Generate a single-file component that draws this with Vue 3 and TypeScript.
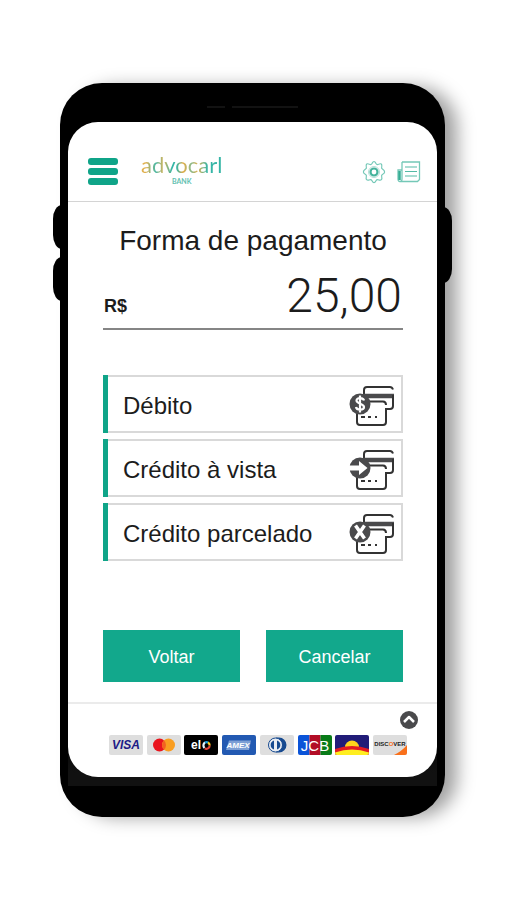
<script setup lang="ts">
type Badge = 'dollar' | 'arrow' | 'cross'

interface PaymentOption {
  label: string
  badge: Badge
}

const amount = '25,00'

const options: PaymentOption[] = [
  { label: 'Débito', badge: 'dollar' },
  { label: 'Crédito à vista', badge: 'arrow' },
  { label: 'Crédito parcelado', badge: 'cross' },
]
</script>

<template>
  <div class="page">
    <div class="phone">
      <span class="side-key volume-up"></span>
      <span class="side-key volume-down"></span>
      <span class="side-key power"></span>
      <div class="speaker"><i class="slot short"></i><i class="slot"></i></div>
      <div class="bezel">
        <div class="screen">
          <header class="topbar">
            <button class="icon-button menu" type="button" aria-label="Menu">
              <span></span><span></span><span></span>
            </button>
            <a class="logo" href="#">
              <span class="logo-name">advocarl</span>
              <span class="logo-sub">BANK</span>
            </a>
            <button class="icon-button" type="button" aria-label="Configurações">
              <svg width="24" height="24" viewBox="0 0 24 24" fill="none" stroke="#74c8b7">
                <path
                  d="M10 3.500Q12-.5 14 3.500q.8 1.500 2.500.8 4-1.800 3.200 2.400-.6 1.800 1 2.600Q24.500 12 20.700 14.300q-1.600.8-1 2.600 1 4-3.200 2.900-1.700-.6-2.500.9-2 3.800-4 0-.8-1.500-2.500-.9-4.200 1.100-3.200-2.900.6-1.800-1-2.600Q-.5 12 3.300 9.300q1.600-.8 1-2.600Q3.500 2.500 7.500 4.300q1.700.7 2.500-.8z"
                  stroke-width="1.200"
                  stroke-linejoin="round"
                />
                <circle cx="12" cy="12" r="5.500" stroke="#b5e0d7" />
                <circle cx="12" cy="12" r="3.500" stroke="#45b39c" stroke-width="2.200" />
              </svg>
            </button>
            <button class="icon-button" type="button" aria-label="Extrato">
              <svg width="24" height="22" viewBox="0 0 24 22" fill="none" stroke="#74c8b7">
                <path d="M5 1h17.500v17.500l-2 2H3.500" stroke-width="1.300" />
                <path d="M5 1v17q0 2.500-2 2.500T1 18V9h4" stroke-width="1.300" />
                <path d="M2.500 10v9" stroke="#35ad94" stroke-width="2.500" />
                <path d="M8 6h12M8 10.500h12M8 15h12" stroke="#55baa5" stroke-width="1.200" />
              </svg>
            </button>
          </header>

          <main class="content">
            <h1>Forma de pagamento</h1>
            <div class="amount">
              <span class="currency">R$</span>
              <span class="value">{{ amount }}</span>
            </div>

            <div class="options">
              <button v-for="option in options" :key="option.badge" class="option" type="button">
                <span>{{ option.label }}</span>
                <svg width="46" height="42" viewBox="0 0 46 42" fill="none" stroke="#333" aria-hidden="true">
                  <path d="M15 9V5q0-3 3-3h23q2 0 3 2.500" stroke-width="2" />
                  <path d="M14 11h31" stroke="#4a4a4c" stroke-width="4.500" />
                  <path d="M44 10v11q0 3-3 3h-4" stroke-width="2" />
                  <path d="M20 16.500h14q3 0 3 3.500" stroke-width="2" />
                  <path d="M37 23v14q0 3-3 3H11q-3 0-3-3v-9" stroke-width="2" />
                  <path d="M12 32h4M19 32h3M26 32h2" stroke-width="2" />
                  <circle cx="11" cy="19" r="10.500" fill="#4a4a4c" stroke="none" />
                  <path
                    v-if="option.badge === 'dollar'"
                    d="M15 15.500c-.5-3-7.500-3.500-7.500 0s7.500 3 7.500 6.500-7.500 3.500-8 0M11 10.500v17"
                    stroke="#fff"
                    stroke-width="2.200"
                  />
                  <path
                    v-else-if="option.badge === 'arrow'"
                    d="M0 16.500h10V12l8.500 7-8.500 7v-4.500H0z"
                    fill="#fff"
                    stroke="none"
                  />
                  <path v-else d="M6.500 12.500l9 13M15.500 12.500l-9 13" stroke="#fff" stroke-width="3.500" />
                </svg>
              </button>
            </div>

            <div class="actions">
              <button type="button">Voltar</button>
              <button type="button">Cancelar</button>
            </div>
          </main>

          <footer class="footer">
            <button class="icon-button expand" type="button" aria-label="Expandir">
              <svg width="18" height="18" viewBox="0 0 18 18" fill="none">
                <circle cx="9" cy="9" r="9" fill="#4a4a4c" />
                <path d="M4 11l5-5 5 5" stroke="#fff" stroke-width="2.500" stroke-linejoin="round" />
              </svg>
            </button>
            <div class="brands">
              <svg viewBox="0 0 34 20" role="img" aria-label="Visa">
                <rect width="34" height="20" rx="2" fill="#dedede" />
                <text x="17" y="14" class="mark visa">VISA</text>
              </svg>
              <svg viewBox="0 0 34 20" role="img" aria-label="Mastercard">
                <rect width="34" height="20" rx="2" fill="#dedede" />
                <circle cx="12.500" cy="10" r="6.500" fill="#e9141d" />
                <circle cx="21.500" cy="10" r="6.500" fill="#f99d20" />
                <path d="M17 5.300a6.500 6.500 0 0 1 0 9.400 6.500 6.500 0 0 1 0-9.400" fill="#f26122" />
              </svg>
              <svg viewBox="0 0 34 20" role="img" aria-label="Elo">
                <rect width="34" height="20" rx="2" />
                <text x="12" y="14" class="mark elo">el</text>
                <g fill="none" stroke-width="2.200">
                  <path d="M20.500 13a3.500 3.500 0 0 1 .5-5.500" stroke="#e8f4fa" />
                  <path d="M21 7.500a3.500 3.500 0 0 1 3 0" stroke="#19a5e0" />
                  <path d="M24 7.500a3.500 3.500 0 0 1 1.700 3" stroke="#ffd21f" />
                  <path d="M25.700 10.500a3.500 3.500 0 0 1-5 3" stroke="#e94435" />
                </g>
              </svg>
              <svg viewBox="0 0 34 20" role="img" aria-label="Amex">
                <rect width="34" height="20" rx="2" fill="#2259b2" />
                <path d="M7 5.500h22l-2 9.500H4z" fill="#7c9fd5" />
                <text x="16" y="13" class="mark amex">AMEX</text>
              </svg>
              <svg viewBox="0 0 34 20" role="img" aria-label="Diners Club">
                <rect width="34" height="20" rx="2" fill="#dedede" />
                <path d="M16 2.500h3a7.500 7.500 0 0 1 0 15h-3z" fill="#174a90" />
                <circle cx="15.500" cy="10" r="7" fill="#e9edf3" stroke="#174a90" />
                <path d="M14 5.500a4.700 4.700 0 0 0 0 9zM17 5.500a4.700 4.700 0 0 1 0 9z" fill="#174a90" />
              </svg>
              <svg viewBox="0 0 34 20" role="img" aria-label="JCB">
                <path d="M2 0h9.500v20H2q-2 0-2-2V2q0-2 2-2" fill="#0b54d8" />
                <path d="M11.500 0h11v20h-11z" fill="#b20d26" />
                <path d="M22.500 0H32q2 0 2 2v16q0 2-2 2h-9.500z" fill="#087b18" />
                <text x="17" y="16" class="mark jcb">JCB</text>
              </svg>
              <svg viewBox="0 0 34 20" role="img" aria-label="Sorocred">
                <rect width="34" height="20" rx="2" fill="#211c78" />
                <path d="M10 12a7 6.500 0 0 1 14 0z" fill="#ffd51c" />
                <path d="M0 14q17-6 34 0v4q0 2-2 2H2q-2 0-2-2z" fill="#e31b23" />
                <path d="M0 17.500q17-6 34 0v.5q0 2-2 2H2q-2 0-2-2z" fill="#ffee20" />
              </svg>
              <svg viewBox="0 0 34 20" role="img" aria-label="Discover">
                <rect width="34" height="20" rx="2" fill="#dedede" />
                <path d="M34 10v8q0 2-2 2H21q8-4 13-10" fill="#f9701b" />
                <text x="17" y="11" class="mark discover">DISC<tspan fill="#f9701b">O</tspan>VER</text>
              </svg>
            </div>
          </footer>
        </div>
      </div>
    </div>
  </div>
</template>

<style>
body {
  margin: 0;
  background: #fff;
}
</style>

<style scoped>
* {
  box-sizing: border-box;
}
.page {
  padding: 83px 61px 83px 60px;
  font-family: "Liberation Sans", Arial, sans-serif;
  color: #1c1c1c;
}
.phone {
  position: relative;
  padding: 0 8px 31px;
  border-radius: 42px;
  background: #000;
  box-shadow: 14px 2px 18px -2px rgba(0, 0, 0, 0.38);
}
.side-key {
  position: absolute;
  left: -7px;
  width: 10px;
  height: 44px;
  border-radius: 9px 0 0 9px / 14px 0 0 14px;
  background: #000;
}
.volume-up {
  top: 122px;
}
.volume-down {
  top: 174px;
}
.power {
  top: 124px;
  right: -7px;
  left: auto;
  height: 76px;
  border-radius: 0 9px 9px 0 / 0 14px 14px 0;
}
.speaker {
  display: flex;
  justify-content: center;
  align-items: center;
  gap: 7px;
  height: 39px;
  padding-top: 8px;
}
.slot {
  width: 66px;
  height: 2px;
  background: #121212;
}
.slot.short {
  width: 18px;
}
.bezel {
  padding-bottom: 9px;
  background: linear-gradient(#000 90%, #111 98%);
}
.screen {
  overflow: hidden;
  border-radius: 30px;
  background: #fff;
}
button {
  font: inherit;
  color: inherit;
  cursor: pointer;
}
.icon-button {
  display: flex;
  padding: 0;
  border: 0;
  background: none;
}
.topbar {
  display: flex;
  align-items: center;
  gap: 11px;
  height: 80px;
  padding: 20px 16px 0 20px;
  border-bottom: 1px solid #d4d4d4;
}
.menu {
  flex-direction: column;
  gap: 3px;
}
.menu span {
  width: 30px;
  height: 7px;
  border-radius: 3px;
  background: #0fa488;
}
.logo {
  display: flex;
  flex-direction: column;
  align-items: center;
  gap: 3px;
  margin-right: auto;
  margin-left: 12px;
  padding-bottom: 4px;
  font-family: Lato, sans-serif;
  text-decoration: none;
}
.logo-name {
  font-size: 22px;
  line-height: 20px;
  color: transparent;
  background: linear-gradient(90deg, #e0b050 6%, #4bb8a6 18%, #dcb458 28%, #35b5a6 38%, #35b5a6 44%, #e6ae48 52%, #8ab98a 62%, #e0b050 70%, #35b5a6 82%);
  background-clip: text;
}
.logo-sub {
  font-size: 7px;
  font-weight: 700;
  line-height: 6px;
  color: #62c0af;
}
.content {
  padding: 23px 34px 20px 35px;
}
h1 {
  margin: 0;
  font-size: 28px;
  font-weight: 400;
  line-height: 32px;
  text-align: center;
  white-space: nowrap;
}
.amount {
  display: flex;
  justify-content: space-between;
  align-items: baseline;
  margin-top: 11px;
  padding: 0 1px 4px;
  border-bottom: 2px solid #858585;
}
.currency {
  font-size: 18px;
  font-weight: 700;
}
.value {
  font-family: Roboto, sans-serif;
  font-size: 48px;
  font-weight: 300;
  line-height: 56px;
}
.options {
  display: grid;
  gap: 6px;
  margin-top: 45px;
}
.option {
  display: flex;
  justify-content: space-between;
  align-items: center;
  height: 58px;
  padding: 3px 8px 0 20px;
  border: 0;
  background: #fff;
  box-shadow: inset 5px 0 #0fa488, inset 0 0 0 2px #d9d9d9;
  font-size: 24px;
  text-align: left;
}
.actions {
  display: grid;
  grid-template-columns: 1fr 1fr;
  gap: 26px;
  margin-top: 69px;
}
.actions button {
  height: 52px;
  padding: 2px 0 0;
  border: 0;
  background: #12a88c;
  font-size: 18px;
  color: #fff;
}
.footer {
  padding: 7px 30px 22px 41px;
  border-top: 2px solid #ebebeb;
}
.expand {
  margin: 0 -11px 0 auto;
  padding: 0;
}
.brands {
  display: flex;
  justify-content: space-between;
  gap: 3px;
  margin-top: 6px;
}
.brands svg {
  width: 34px;
  height: 20px;
}
.mark {
  font-family: "Liberation Sans", Arial, sans-serif;
  font-weight: 700;
  text-anchor: middle;
  fill: #fff;
}
.visa {
  font-size: 12px;
  font-style: italic;
  fill: #201a86;
}
.elo {
  font-size: 12px;
}
.amex {
  font-size: 8px;
  font-style: italic;
}
.jcb {
  font-size: 15px;
  font-weight: 400;
}
.discover {
  font-size: 6px;
  fill: #222;
}
</style>
